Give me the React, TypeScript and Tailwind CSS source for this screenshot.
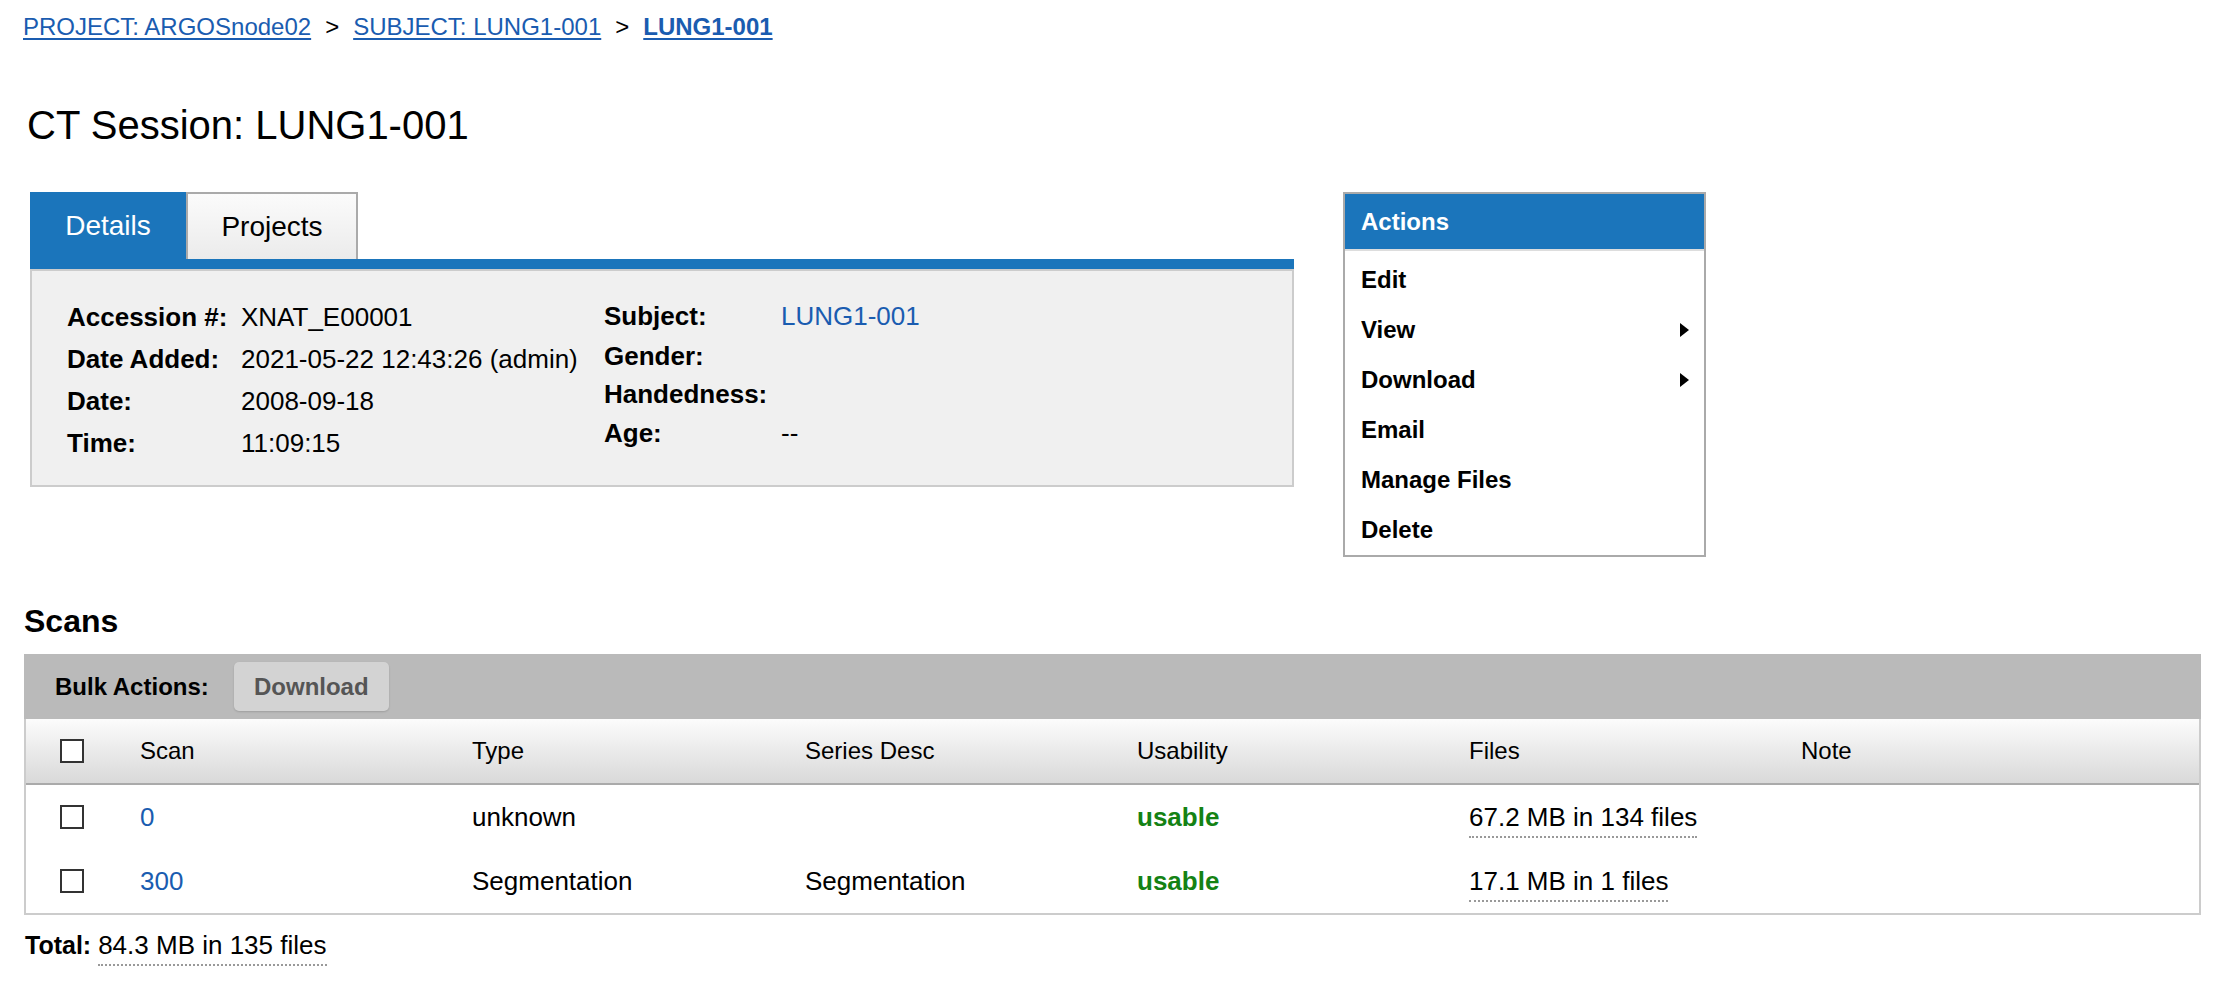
const actions = [
  { label: "Edit", sub: false },
  { label: "View", sub: true },
  { label: "Download", sub: true },
  { label: "Email", sub: false },
  { label: "Manage Files", sub: false },
  { label: "Delete", sub: false },
];

const scans = [
  { id: "0", type: "unknown", desc: "", usability: "usable", files: "67.2 MB in 134 files" },
  { id: "300", type: "Segmentation", desc: "Segmentation", usability: "usable", files: "17.1 MB in 1 files" },
];

const Checkbox = () => (
  <span className="block h-[24px] w-[24px] border-2 border-[#333333] bg-white" />
);

const Arrow = () => (
  <svg width="9" height="14" viewBox="0 0 9 14" className="block">
    <polygon points="0,0 9,7 0,14" fill="#000" />
  </svg>
);

const App = () => {
  return (
    <div className="min-h-screen bg-white pl-[24px] font-['Liberation_Sans',Arial,Helvetica,sans-serif] text-black">
      <nav className="-ml-[1px] flex items-center gap-[14px] pt-[13px] text-[24px] leading-[27px]">
        <a className="text-[#1a5cb0] underline decoration-2 underline-offset-[3px]">PROJECT: ARGOSnode02</a>
        <span>&gt;</span>
        <a className="text-[#1a5cb0] underline decoration-2 underline-offset-[3px]">SUBJECT: LUNG1-001</a>
        <span>&gt;</span>
        <a className="font-bold text-[#1a5cb0] underline decoration-2 underline-offset-[3px]">LUNG1-001</a>
      </nav>

      <h1 className="ml-[3px] mt-[62px] text-[40px] font-normal leading-[46px]">CT Session: LUNG1-001</h1>

      <div className="ml-[6px] mt-[44px] flex items-start gap-[49px]">
        <div className="w-[1264px]">
          <div className="flex h-[67px]">
            <div className="flex w-[156px] items-center justify-center bg-[#1b75bb] text-[28px] text-white">Details</div>
            <div className="flex w-[172px] items-center justify-center border-2 border-b-0 border-[#aaaaaa] bg-linear-to-b from-[#fbfbfb] to-[#ebebeb] text-[28px]">
              Projects
            </div>
          </div>
          <div className="h-[10px] bg-[#1b75bb]" />
          <div className="flex h-[218px] border-2 border-[#cccccc] bg-[#f0f0f0] pl-[35px] pt-[25px] text-[26px]">
            <div className="grid w-[537px] grid-cols-[174px_1fr] auto-rows-[42px] items-center">
              <span className="font-bold">Accession #:</span>
              <span>XNAT_E00001</span>
              <span className="font-bold">Date Added:</span>
              <span>2021-05-22 12:43:26 (admin)</span>
              <span className="font-bold">Date:</span>
              <span>2008-09-18</span>
              <span className="font-bold">Time:</span>
              <span>11:09:15</span>
            </div>
            <div className="flex w-[400px] flex-col">
              <div className="flex h-[40px] items-center">
                <span className="w-[177px] font-bold">Subject:</span>
                <a className="text-[#1a5cb0]">LUNG1-001</a>
              </div>
              <div className="flex h-[40px] items-center">
                <span className="w-[177px] font-bold">Gender:</span>
              </div>
              <div className="flex h-[37px] items-center">
                <span className="w-[177px] font-bold">Handedness:</span>
              </div>
              <div className="flex h-[41px] items-center">
                <span className="w-[177px] font-bold">Age:</span>
                <span>--</span>
              </div>
            </div>
          </div>
        </div>

        <div className="w-[363px] border-2 border-[#aaaaaa] bg-white">
          <div className="flex h-[57px] items-center border-b-2 border-[#dddddd] bg-[#1b75bb] pl-[16px] text-[24px] font-bold text-white">
            Actions
          </div>
          <ul className="pt-[4px]">
            {actions.map((a) => (
              <li key={a.label} className="flex h-[50px] items-center justify-between pl-[16px] pr-[15px] text-[24px] font-bold">
                <span>{a.label}</span>
                {a.sub && <Arrow />}
              </li>
            ))}
          </ul>
        </div>
      </div>

      <h2 className="mt-[46px] text-[32px] font-bold leading-[37px]">Scans</h2>

      <div className="mt-[14px] w-[2177px]">
        <div className="flex h-[65px] items-center bg-[#bababa] pl-[31px] text-[24px] font-bold">
          <span>Bulk Actions:</span>
          <button className="ml-[25px] h-[49px] w-[155px] rounded-[5px] bg-[#d3d3d3] text-[24px] font-bold text-[#555555] shadow-[0_1px_2px_rgba(0,0,0,0.15)]">
            Download
          </button>
        </div>
        <div className="border-x-2 border-b-2 border-[#cccccc]">
          <div className="grid h-[66px] grid-cols-[114px_332px_333px_332px_332px_332px_1fr] items-center border-b-2 border-[#aaaaaa] bg-linear-to-b from-[#fcfcfc] to-[#d9d9d9] text-[24px]">
            <div className="pl-[34px]">
              <Checkbox />
            </div>
            <span>Scan</span>
            <span>Type</span>
            <span>Series Desc</span>
            <span>Usability</span>
            <span>Files</span>
            <span>Note</span>
          </div>
          {scans.map((s) => (
            <div key={s.id} className="grid h-[64px] grid-cols-[114px_332px_333px_332px_332px_332px_1fr] items-center text-[26px]">
              <div className="pl-[34px]">
                <Checkbox />
              </div>
              <a className="text-[#1a5cb0]">{s.id}</a>
              <span>{s.type}</span>
              <span>{s.desc}</span>
              <span className="font-bold text-[#148214]">{s.usability}</span>
              <span>
                <span className="border-b-2 border-dotted border-[#999999] pb-[4px]">{s.files}</span>
              </span>
              <span />
            </div>
          ))}
        </div>
      </div>

      <p className="ml-[1px] mt-[16px] text-[25px] leading-[28px]">
        <span className="font-bold">Total:</span>{" "}
        <span className="border-b-2 border-dotted border-[#999999] pb-[4px] text-[26px]">84.3 MB in 135 files</span>
      </p>
    </div>
  );
};

export default App;
